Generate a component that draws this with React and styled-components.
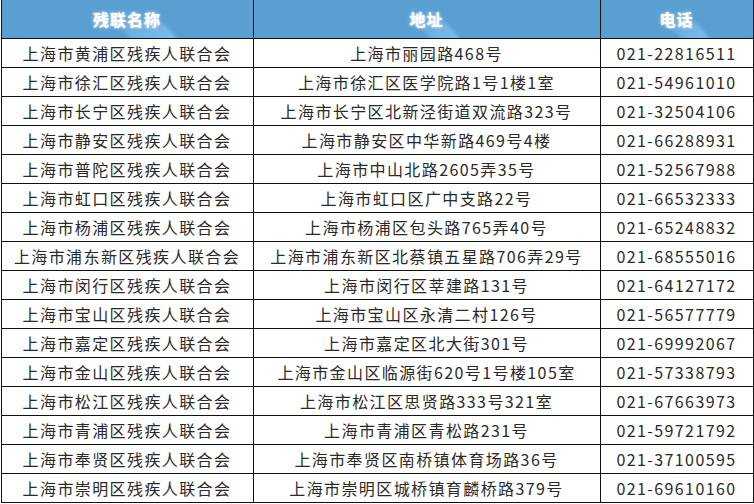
import React from 'react';
import styled, { createGlobalStyle } from 'styled-components';

const rows = [
    ['上海市黄浦区残疾人联合会', '上海市丽园路468号', '021-22816511'],
    ['上海市徐汇区残疾人联合会', '上海市徐汇区医学院路1号1楼1室', '021-54961010'],
    ['上海市长宁区残疾人联合会', '上海市长宁区北新泾街道双流路323号', '021-32504106'],
    ['上海市静安区残疾人联合会', '上海市静安区中华新路469号4楼', '021-66288931'],
    ['上海市普陀区残疾人联合会', '上海市中山北路2605弄35号', '021-52567988'],
    ['上海市虹口区残疾人联合会', '上海市虹口区广中支路22号', '021-66532333'],
    ['上海市杨浦区残疾人联合会', '上海市杨浦区包头路765弄40号', '021-65248832'],
    ['上海市浦东新区残疾人联合会', '上海市浦东新区北蔡镇五星路706弄29号', '021-68555016'],
    ['上海市闵行区残疾人联合会', '上海市闵行区莘建路131号', '021-64127172'],
    ['上海市宝山区残疾人联合会', '上海市宝山区永清二村126号', '021-56577779'],
    ['上海市嘉定区残疾人联合会', '上海市嘉定区北大街301号', '021-69992067'],
    ['上海市金山区残疾人联合会', '上海市金山区临源街620号1号楼105室', '021-57338793'],
    ['上海市松江区残疾人联合会', '上海市松江区思贤路333号321室', '021-67663973'],
    ['上海市青浦区残疾人联合会', '上海市青浦区青松路231号', '021-59721792'],
    ['上海市奉贤区残疾人联合会', '上海市奉贤区南桥镇体育场路36号', '021-37100595'],
    ['上海市崇明区残疾人联合会', '上海市崇明区城桥镇育麟桥路379号', '021-69610160'],
];

const GlobalStyle = createGlobalStyle`
    body {
        margin: 0;
        background: #fff;
        font-family: "Noto Sans CJK SC", "Noto Sans", sans-serif;
    }
`;

const App = () => {
    return (
        <>
            <GlobalStyle />
            <Table>
                <colgroup>
                    <Col $w={252} />
                    <Col $w={347} />
                    <Col $w={153} />
                </colgroup>
                <thead>
                    <tr>
                        <HeadCell><HeadLabel>残联名称</HeadLabel></HeadCell>
                        <HeadCell><HeadLabel>地址</HeadLabel></HeadCell>
                        <HeadCell><HeadLabel>电话</HeadLabel></HeadCell>
                    </tr>
                </thead>
                <tbody>
                    {rows.map(([name, address, phone]) => (
                        <tr key={name}>
                            <Cell>{name}</Cell>
                            <Cell>{address}</Cell>
                            <Cell>{phone}</Cell>
                        </tr>
                    ))}
                </tbody>
            </Table>
        </>
    )
}

const Table = styled.table`
    width: 752px;
    margin-left: 0.5px;
    border-collapse: collapse;
    table-layout: fixed;
`;

const Col = styled.col`
    width: ${props => props.$w}px;
`;

const HeadCell = styled.th`
    height: 38px;
    padding: 0;
    background: #599fd2;
    border: 1px solid #111;
    border-top: 0;
    text-align: center;
    vertical-align: middle;
    overflow: hidden;
`;

const HeadLabel = styled.span`
    position: relative;
    display: inline-block;
    color: #fff;
    font-size: 16px;
    font-weight: bold;
    letter-spacing: 1px;
    text-shadow: 0 0 2px rgba(255, 255, 255, 0.9), 0 0 4px rgba(255, 255, 255, 0.5);
    z-index: 0;

    &::before {
        content: "";
        position: absolute;
        left: 45%;
        right: -10px;
        top: 65%;
        bottom: -9px;
        background: linear-gradient(to bottom right, rgba(190, 225, 255, 0.1), rgba(140, 200, 250, 0.8));
        transform: skewX(40deg);
        filter: blur(2px);
        z-index: -1;
    }
`;

const Cell = styled.td`
    height: 28px;
    padding: 0;
    border: 1px solid #111;
    color: #2a2a2a;
    font-size: 16px;
    letter-spacing: 1.4px;
    text-align: center;
    vertical-align: middle;
    white-space: nowrap;
`;

export default App
